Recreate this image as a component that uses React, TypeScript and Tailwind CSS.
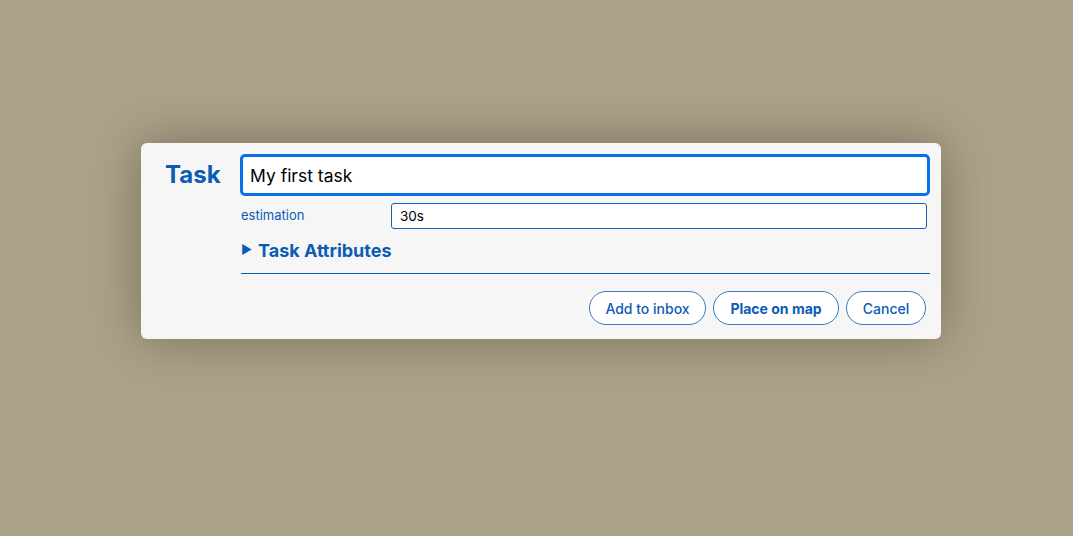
import React from "react";

export default function App() {
  return (
    <div className="w-[1073px] h-[536px] bg-[#aca28a] overflow-hidden" style={{ fontFamily: "Inter, Roboto, 'Noto Sans', sans-serif" }}>
      <div className="pt-[143px] pl-[141px]">
        <div className="w-[800px] h-[196px] bg-[#f6f6f6] rounded-[6px] shadow-[0_0_50px_rgba(60,50,30,0.45)] flex">
          <div className="w-[99px] pl-[24px] pt-[16px]">
            <div className="text-[24px] font-bold text-[#0b5cb5] leading-[32px]">Task</div>
          </div>
          <div className="w-[690px] pt-[11px] flex flex-col">
            <div className="h-[42px] border-[3px] border-[#0a6fe8] rounded-[5px] bg-white flex items-center pl-[7px] pt-[2px]">
              <span className="text-[17.5px] text-black">My first task</span>
            </div>
            <div className="flex items-center mt-[7px] h-[26px]">
              <div className="w-[151px] pl-px text-[13px] text-[#0b5cb5]">estimation</div>
              <div className="w-[536px] h-[26px] border border-[#1a5fb4] rounded-[3px] bg-white flex items-center pl-[8px]">
                <span className="text-[13.5px] text-black">30s</span>
              </div>
            </div>
            <div className="flex items-center mt-[9px] h-[24px] pl-px">
              <span className="text-[12px] text-[#0b5cb5] mr-[6px]">▶</span>
              <span className="text-[18px] font-bold text-[#0b5cb5]">Task Attributes</span>
            </div>
            <div className="mt-[11px] ml-px h-px bg-[#0b5cb5]"></div>
            <div className="flex justify-end gap-[7px] mt-[17px] pr-[4px]">
              <button className="h-[34px] w-[117px] rounded-full border border-[#3b78c8] bg-white text-[14px] font-medium text-[#0b5cb5]">Add to inbox</button>
              <button className="h-[34px] w-[126px] rounded-full border border-[#3b78c8] bg-white text-[14px] font-bold text-[#0b5cb5]">Place on map</button>
              <button className="h-[34px] w-[80px] rounded-full border border-[#3b78c8] bg-white text-[14px] font-medium text-[#0b5cb5]">Cancel</button>
            </div>
          </div>
        </div>
      </div>
    </div>
  );
}
